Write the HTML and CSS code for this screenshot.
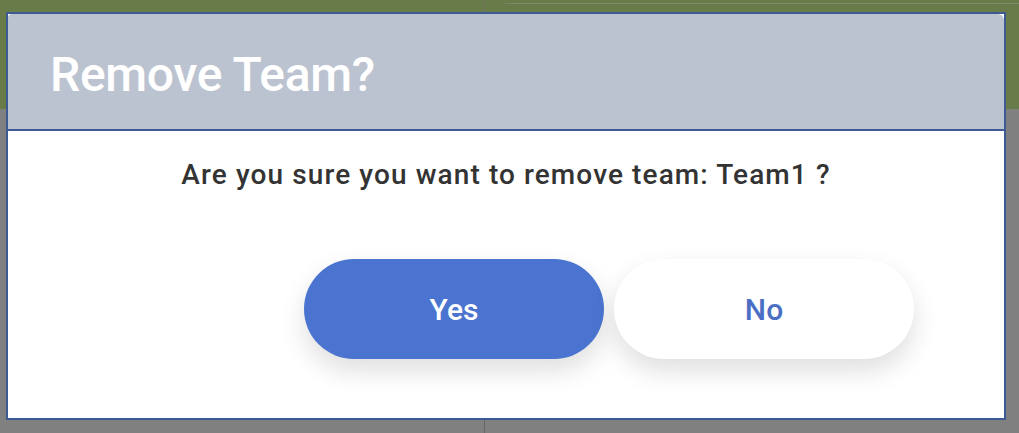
FILE: index.html
```html
<!DOCTYPE html>
<html lang="en">
<head>
<meta charset="utf-8">
<title>Remove Team?</title>
<link rel="stylesheet" href="styles.css">
</head>
<body>
<div class="page">
  <div class="topbar">
    <div class="topbar-col left"></div>
    <div class="topbar-col right"><div class="topbar-line"></div></div>
  </div>
  <div class="content">
    <div class="content-col left"></div>
    <div class="content-col right"></div>
  </div>

  <div class="modal" role="dialog" aria-labelledby="modal-title">
    <div class="modal-header">
      <h1 id="modal-title" class="modal-title">Remove Team?</h1>
    </div>
    <div class="modal-body">
      <p class="modal-message">Are you sure you want to remove team: Team1 ?</p>
      <div class="modal-actions">
        <button class="btn btn-primary" type="button">Yes</button>
        <button class="btn btn-secondary" type="button">No</button>
      </div>
    </div>
  </div>
</div>
</body>
</html>
```

FILE: styles.css
```css
* { box-sizing: border-box; }

html, body {
  margin: 0;
  padding: 0;
  width: 1019px;
  height: 433px;
  overflow: hidden;
}

body {
  font-family: Roboto, "Liberation Sans", sans-serif;
  background: #808080;
}

.page {
  position: relative;
  width: 1019px;
  height: 433px;
  display: flex;
  flex-direction: column;
}

.topbar {
  height: 109px;
  background: #687b48;
  display: flex;
}

.topbar-col.left {
  width: 485px;
  border-right: 1px solid #6f7260;
}

.topbar-col.right {
  flex: 1;
  padding-top: 3px;
  padding-left: 20px;
}

.topbar-line {
  height: 1px;
  background: #7a8a64;
}

.content {
  flex: 1;
  display: flex;
}

.content-col.left {
  width: 485px;
  border-right: 1px solid #666666;
}

.content-col.right {
  flex: 1;
}

.modal {
  position: absolute;
  left: 6px;
  top: 12px;
  width: 1000px;
  height: 408px;
  border: 2px solid #3d5a92;
  background: #ffffff;
  display: flex;
  flex-direction: column;
}

.modal-header {
  height: 117px;
  background: #bcc3d0;
  border-bottom: 2px solid #3d5a92;
  padding: 0 0 0 42px;
  display: flex;
  align-items: center;
  border-radius: 4px 6px 0 0;
}

.modal-title {
  margin: 0;
  padding-top: 6px;
  font-size: 48px;
  font-weight: 500;
  color: #ffffff;
  letter-spacing: -0.3px;
}

.modal-body {
  flex: 1;
  display: flex;
  flex-direction: column;
}

.modal-message {
  margin: 27px 0 0;
  line-height: 33px;
  text-align: center;
  font-size: 28px;
  font-weight: 500;
  color: #333333;
  letter-spacing: 1.1px;
}

.modal-actions {
  display: flex;
  gap: 10px;
  margin-top: 68px;
  padding-left: 296px;
}

.btn {
  width: 300px;
  height: 100px;
  border: none;
  border-radius: 50px;
  font-family: Roboto, "Liberation Sans", sans-serif;
  font-size: 30px;
  font-weight: 500;
  box-shadow: 0 12px 26px rgba(0, 0, 0, 0.13);
  cursor: pointer;
}

.btn-primary {
  background: #4a74cf;
  color: #ffffff;
}

.btn-secondary {
  background: #ffffff;
  color: #4a6fc4;
}
```
